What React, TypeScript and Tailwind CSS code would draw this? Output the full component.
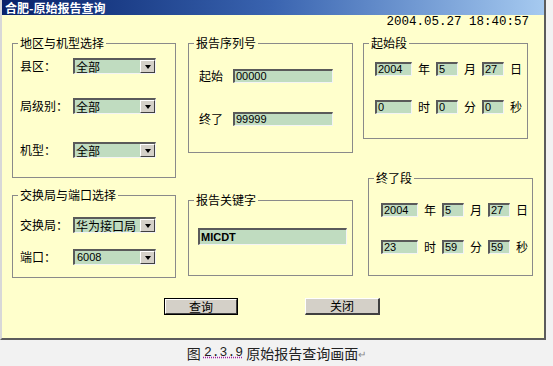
import React from 'react';

function Sunken({ className, children }: { className: string; children?: React.ReactNode }) {
  return (
    <div className={`bg-[#c0dcc0] border-t-2 border-l-2 border-t-[#5a5a5a] border-l-[#5a5a5a] border-b border-r border-b-[#f4f4f4] border-r-[#f4f4f4] flex items-center pl-[1px] text-[11px] leading-none font-['Liberation_Sans',sans-serif] text-black overflow-hidden ${className}`}>
      {children}
    </div>
  )
}

function Select({ value, latin }: { value: string; latin?: boolean }) {
  return (
    <div className="w-[83px] h-[16px] bg-[#c0dcc0] border-t-2 border-l-2 border-t-[#5a5a5a] border-l-[#5a5a5a] border-b border-r border-b-[#f4f4f4] border-r-[#f4f4f4] flex">
      <div className={latin ? "flex-1 flex items-center pl-[2px] text-[11px] leading-none font-['Liberation_Sans',sans-serif]" : "flex-1 flex items-center pl-[1px] text-[12px] leading-none whitespace-nowrap"}>
        {value}
      </div>
      <div className="w-[15px] h-full bg-[#d4d0c8] border-t border-l border-t-white border-l-white border-b border-r border-b-[#404040] border-r-[#404040] flex items-center justify-center">
        <div className="w-0 h-0 border-x-[3px] border-t-[4px] border-x-transparent border-t-black" />
      </div>
    </div>
  )
}

function Group({ title, className, inner, children }: { title: string; className: string; inner: string; children?: React.ReactNode }) {
  return (
    <fieldset className={`border border-[#8a8a8a] ${className}`}>
      <legend className="ml-[5px] px-[2px] text-[12px] leading-[14px]">{title}</legend>
      <div className={inner}>{children}</div>
    </fieldset>
  )
}

function SelectRow({ label, value, latin, className }: { label: string; value: string; latin?: boolean; className: string }) {
  return (
    <div className={`flex items-center h-[16px] ${className}`}>
      <div className="w-[53px] text-[12px] leading-none">{label}</div>
      <Select value={value} latin={latin} />
    </div>
  )
}

function DateRow({ values, units, className }: { values: string[]; units: string[]; className: string }) {
  return (
    <div className={`flex items-center h-[14px] gap-[6px] ${className}`}>
      <Sunken className="w-[37px] h-[14px]">{values[0]}</Sunken>
      <span className="text-[12px] leading-none w-[12px]">{units[0]}</span>
      <Sunken className="w-[22px] h-[14px]">{values[1]}</Sunken>
      <span className="text-[12px] leading-none w-[12px]">{units[1]}</span>
      <Sunken className="w-[22px] h-[14px]">{values[2]}</Sunken>
      <span className="text-[12px] leading-none w-[12px]">{units[2]}</span>
    </div>
  )
}

export default function App() {
  return (
    <div className="w-[553px] h-[366px] bg-[#f2f2f2] text-black font-['Noto_Sans_CJK_SC',sans-serif] overflow-hidden">
      <div className="w-[546px] h-[340px] bg-[#ffffcc] border-l-2 border-l-[#d8d8d8] border-r-2 border-r-[#5c5c5c] border-b-2 border-b-[#5c5c5c] flex flex-col">
        {/* title bar */}
        <div className="h-[15px] bg-gradient-to-r from-[#08216a] via-[#3a64b0] to-[#a6caf0] flex items-center pl-[3px]">
          <span className="text-white font-bold text-[12px] leading-none">合肥-原始报告查询</span>
        </div>
        <div className="h-[15px] flex items-center justify-end pr-[15px] font-['Liberation_Mono',monospace] text-[12.5px] leading-none">
          2004.05.27 18:40:57
        </div>

        <div className="h-[248px] flex pl-[10px]">
          {/* column 1 */}
          <div className="w-[164px] flex flex-col">
            <Group title="地区与机型选择" className="mt-[6px] h-[142px]" inner="pl-[7px] pt-[8px]">
              <SelectRow label="县区：" value="全部" className="" />
              <SelectRow label="局级别：" value="全部" className="mt-[24px]" />
              <SelectRow label="机型：" value="全部" className="mt-[28px]" />
            </Group>
            <Group title="交换局与端口选择" className="mt-[10px] h-[90px]" inner="pl-[7px] pt-[15px]">
              <SelectRow label="交换局：" value="华为接口局" className="" />
              <SelectRow label="端口：" value="6008" latin className="mt-[16px]" />
            </Group>
          </div>

          {/* column 2 */}
          <div className="w-[165px] ml-[12px] flex flex-col">
            <Group title="报告序列号" className="mt-[6px] h-[117px]" inner="pl-[10px] pt-[19px]">
              <div className="flex items-center h-[14px]">
                <span className="w-[34px] text-[12px] leading-none">起始</span>
                <Sunken className="w-[100px] h-[14px]">00000</Sunken>
              </div>
              <div className="flex items-center h-[14px] mt-[29px]">
                <span className="w-[34px] text-[12px] leading-none">终了</span>
                <Sunken className="w-[100px] h-[14px]">99999</Sunken>
              </div>
            </Group>
            <Group title="报告关键字" className="mt-[40px] h-[83px]" inner="pl-[9px] pt-[21px]">
              <Sunken className="w-[149px] h-[17px] font-['Liberation_Mono',monospace] font-bold">MICDT</Sunken>
            </Group>
          </div>

          {/* column 3 */}
          <div className="w-[170px] ml-[10px] flex flex-col">
            <Group title="起始段" className="w-[165px] mt-[6px] h-[103px]" inner="pl-[11px] pt-[12px]">
              <DateRow values={['2004', '5', '27']} units={['年', '月', '日']} className="" />
              <DateRow values={['0', '0', '0']} units={['时', '分', '秒']} className="mt-[24px]" />
            </Group>
            <Group title="终了段" className="w-[165px] ml-[5px] mt-[32px] h-[105px]" inner="pl-[12px] pt-[18px]">
              <DateRow values={['2004', '5', '27']} units={['年', '月', '日']} className="" />
              <DateRow values={['23', '59', '59']} units={['时', '分', '秒']} className="mt-[23px]" />
            </Group>
          </div>
        </div>

        {/* buttons */}
        <div className="flex mt-[20px] pl-[162px] gap-[67px]">
          <button className="w-[74px] h-[17px] border border-black bg-[#d4d0c8] p-0">
            <div className="w-full h-full border-t border-l border-t-white border-l-white border-b border-r border-b-[#404040] border-r-[#404040] flex items-center justify-center text-[12px] leading-none">
              查询
            </div>
          </button>
          <button className="w-[75px] h-[17px] bg-[#d4d0c8] border-t border-l border-t-white border-l-white border-b-2 border-r-2 border-b-[#404040] border-r-[#404040] flex items-center justify-center text-[12px] leading-none">
            关闭
          </button>
        </div>
      </div>

      {/* caption */}
      <div className="h-[26px] flex items-center justify-center text-[14px] text-[#222]">
        <span>图&nbsp;</span>
        <span className="font-['Liberation_Mono',monospace] text-[13px] underline decoration-dotted decoration-[#a020a0]">2.3.9</span>
        <span>&nbsp;原始报告查询画面</span>
        <span className="text-[10px] text-[#888]">↵</span>
      </div>
    </div>
  )
}
